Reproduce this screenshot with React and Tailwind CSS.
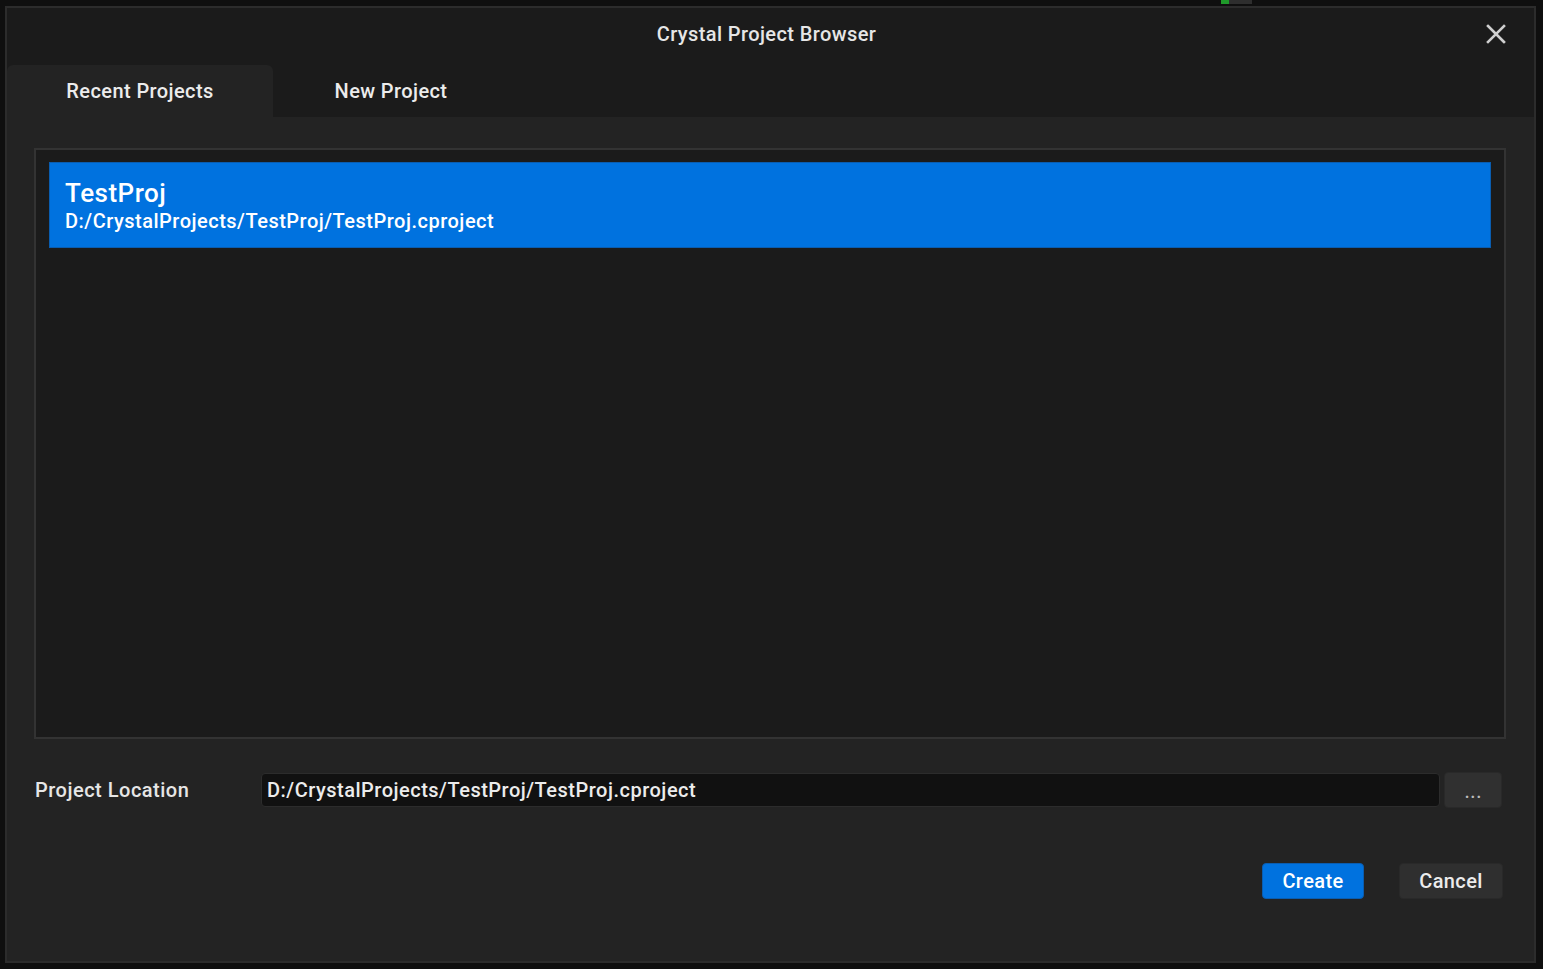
import { useState } from "react"

const font = { fontFamily: "Roboto, 'Noto Sans', sans-serif" }

const App = () => {
    const [tab, setTab] = useState("recent")
    const [location, setLocation] = useState("D:/CrystalProjects/TestProj/TestProj.cproject")

    return (
        <div className="w-[1543px] h-[969px] bg-[#0f0f0f] pt-[6px] pl-[5px] overflow-hidden relative" style={font}>
            {/* bits of the app behind the dialog */}
            <div className="absolute top-0 left-[1221px] w-[8px] h-[4px] bg-[#1f9a2a]" />
            <div className="absolute top-0 left-[1229px] w-[23px] h-[4px] bg-[#2e2e2e]" />

            <div className="w-[1531px] h-[957px] border-2 border-[#2c2c2c] bg-[#1b1b1b] flex flex-col">
                <div className="h-[57px] relative flex items-center justify-center">
                    <span className="text-[20px] font-medium tracking-[0.4px] text-[#e6e6e6] -mt-[5px] -ml-[8px]">Crystal Project Browser</span>
                    <button className="absolute right-[26px] top-[14px] text-[#cfcfcf]">
                        <svg width="24" height="24" viewBox="0 0 24 24" fill="none" stroke="currentColor" strokeWidth="2.6" strokeLinecap="square">
                            <path d="M4 4 L20 20 M20 4 L4 20" />
                        </svg>
                    </button>
                </div>

                <div className="h-[52px] flex">
                    <button
                        onClick={() => setTab("recent")}
                        className={`w-[266px] h-full rounded-t-md text-[20px] font-medium tracking-[0.4px] text-[#ececec] ${tab === "recent" ? "bg-[#232323]" : ""}`}
                    >
                        Recent Projects
                    </button>
                    <button
                        onClick={() => setTab("new")}
                        className={`w-[236px] h-full rounded-t-md text-[20px] font-medium tracking-[0.4px] text-[#ececec] ${tab === "new" ? "bg-[#232323]" : ""}`}
                    >
                        New Project
                    </button>
                </div>

                <div className="flex-1 bg-[#232323] pt-[31px] pl-[27px] pr-[28px] flex flex-col">
                    <div className="h-[591px] border-2 border-[#333333] bg-[#1b1b1b] pt-[12px] px-[13px]">
                        <div className="h-[86px] bg-[#0072df] border border-[#0a5db0] pl-[15px] pt-[15px] text-white">
                            <div className="text-[26px] font-medium leading-[31px] tracking-[0.5px]">TestProj</div>
                            <div className="text-[20px] font-medium leading-[25px] tracking-[0.5px]">D:/CrystalProjects/TestProj/TestProj.cproject</div>
                        </div>
                    </div>

                    <div className="mt-[33px] flex items-center h-[36px]">
                        <span className="w-[227px] text-[20px] font-medium tracking-[0.5px] text-[#e6e6e6] pl-[1px]">Project Location</span>
                        <input
                            value={location}
                            onChange={e => setLocation(e.target.value)}
                            className="w-[1179px] h-[34px] bg-[#111111] border border-[#2c2c2c] rounded-[4px] px-[5px] text-[20px] font-medium tracking-[0.5px] text-[#ececec] outline-none"
                            style={font}
                        />
                        <button className="ml-[4px] w-[58px] h-[36px] bg-[#303030] border border-[#292929] rounded-[4px] text-[#bdbdbd] text-[22px] leading-none pt-[2px]">
                            ...
                        </button>
                    </div>

                    <div className="mt-[55px] flex justify-end gap-[35px] pr-[3px]">
                        <button className="w-[102px] h-[36px] bg-[#0072df] border border-[#0a5db0] rounded-[4px] text-white text-[20px] font-medium tracking-[0.4px]">
                            Create
                        </button>
                        <button className="w-[104px] h-[36px] bg-[#2f2f2f] border border-[#292929] rounded-[4px] text-[#ececec] text-[20px] font-medium tracking-[0.4px]">
                            Cancel
                        </button>
                    </div>
                </div>
            </div>
        </div>
    )
}

export default App
